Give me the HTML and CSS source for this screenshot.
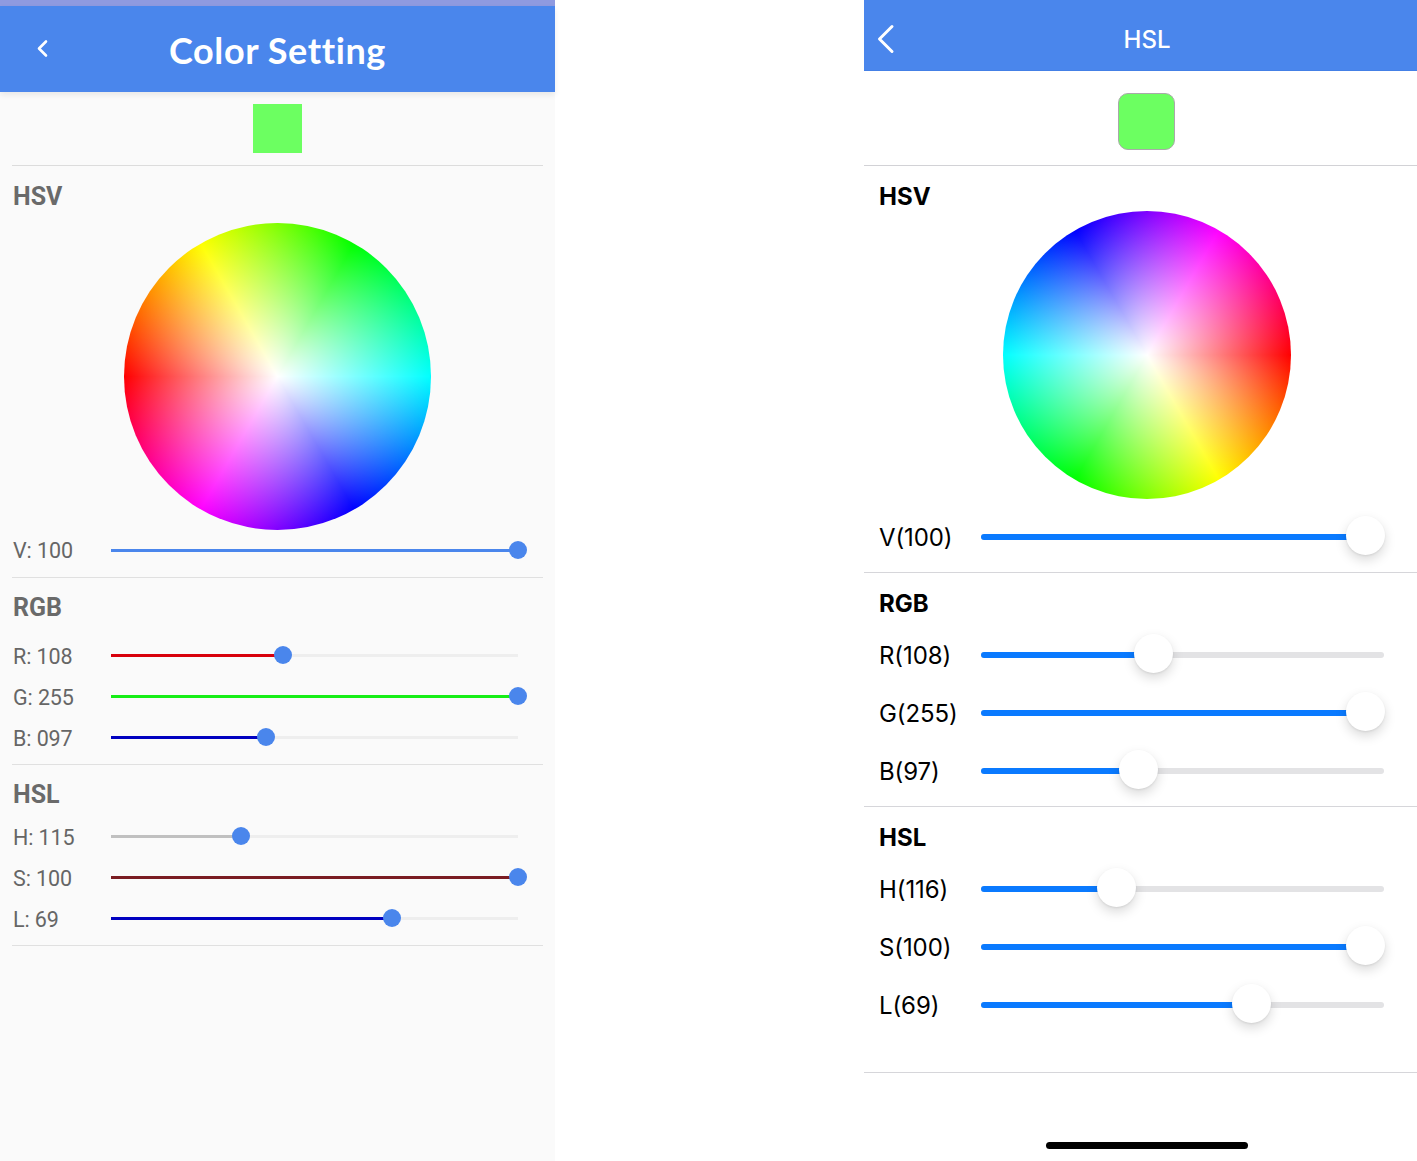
FILE: index.html
```html
<!DOCTYPE html>
<html lang="en">
<head>
<meta charset="utf-8">
<title>Color Setting</title>
<link rel="stylesheet" href="styles.css">
</head>
<body>
<div class="page">
  <section class="android">
    <div class="status-strip"></div>
    <header class="a-head">
      <svg class="a-back" viewBox="0 0 14 20" width="14" height="20"><path d="M11 2.5 L4 9.5 L11 16.5" fill="none" stroke="#fff" stroke-width="2.6" stroke-linecap="round" stroke-linejoin="round"/></svg>
      <h1 class="a-title">Color Setting</h1>
    </header>
    <div class="a-preview-wrap"><div class="a-preview"></div></div>
    <div class="a-sec a-hsv">
      <h2 class="a-h">HSV</h2>
      <div class="a-wheel"></div>
      <div class="a-row a-row-v"><span class="a-lab">V: 100</span><div class="a-track"><div class="a-fill c-blue" style="width:100%"></div><div class="a-knob" style="left:100%"></div></div></div>
    </div>
    <div class="a-sec a-rgb">
      <h2 class="a-h">RGB</h2>
      <div class="a-rows">
        <div class="a-row"><span class="a-lab">R: 108</span><div class="a-track"><div class="a-fill c-red" style="width:42.3%"></div><div class="a-knob" style="left:42.3%"></div></div></div>
        <div class="a-row"><span class="a-lab">G: 255</span><div class="a-track"><div class="a-fill c-green" style="width:100%"></div><div class="a-knob" style="left:100%"></div></div></div>
        <div class="a-row"><span class="a-lab">B: 097</span><div class="a-track"><div class="a-fill c-navy" style="width:38%"></div><div class="a-knob" style="left:38%"></div></div></div>
      </div>
    </div>
    <div class="a-sec a-hsl">
      <h2 class="a-h">HSL</h2>
      <div class="a-rows a-rows-hsl">
        <div class="a-row"><span class="a-lab">H: 115</span><div class="a-track"><div class="a-fill c-grey" style="width:32%"></div><div class="a-knob" style="left:32%"></div></div></div>
        <div class="a-row"><span class="a-lab">S: 100</span><div class="a-track"><div class="a-fill c-maroon" style="width:100%"></div><div class="a-knob" style="left:100%"></div></div></div>
        <div class="a-row"><span class="a-lab">L: 69</span><div class="a-track"><div class="a-fill c-navy" style="width:69%"></div><div class="a-knob" style="left:69%"></div></div></div>
      </div>
    </div>
  </section>

  <section class="ios">
    <header class="i-head">
      <svg class="i-back" viewBox="0 0 20 32" width="20" height="32"><path d="M16 3.5 L3.5 16 L16 28.5" fill="none" stroke="#fff" stroke-width="3" stroke-linecap="round" stroke-linejoin="round"/></svg>
      <h1 class="i-title">HSL</h1>
    </header>
    <div class="i-preview-wrap"><div class="i-preview"></div></div>
    <div class="i-sec i-hsv">
      <h2 class="i-h">HSV</h2>
      <div class="i-wheel"></div>
      <div class="i-row i-row-v"><span class="i-lab">V(100)</span><div class="i-track"><div class="i-fill" style="width:95.5%"></div><div class="i-knob" style="left:95.5%"></div></div></div>
    </div>
    <div class="i-sec i-rgb">
      <h2 class="i-h">RGB</h2>
      <div class="i-rows">
        <div class="i-row"><span class="i-lab">R(108)</span><div class="i-track"><div class="i-fill" style="width:42.9%"></div><div class="i-knob" style="left:42.9%"></div></div></div>
        <div class="i-row"><span class="i-lab">G(255)</span><div class="i-track"><div class="i-fill" style="width:95.5%"></div><div class="i-knob" style="left:95.5%"></div></div></div>
        <div class="i-row"><span class="i-lab">B(97)</span><div class="i-track"><div class="i-fill" style="width:39%"></div><div class="i-knob" style="left:39%"></div></div></div>
      </div>
    </div>
    <div class="i-sec i-hsl">
      <h2 class="i-h">HSL</h2>
      <div class="i-rows">
        <div class="i-row"><span class="i-lab">H(116)</span><div class="i-track"><div class="i-fill" style="width:33.7%"></div><div class="i-knob" style="left:33.7%"></div></div></div>
        <div class="i-row"><span class="i-lab">S(100)</span><div class="i-track"><div class="i-fill" style="width:95.5%"></div><div class="i-knob" style="left:95.5%"></div></div></div>
        <div class="i-row"><span class="i-lab">L(69)</span><div class="i-track"><div class="i-fill" style="width:67.2%"></div><div class="i-knob" style="left:67.2%"></div></div></div>
      </div>
    </div>
    <div class="home"></div>
  </section>
</div>
</body>
</html>
```
FILE: styles.css
```css
* { box-sizing: border-box; }
html, body { margin: 0; padding: 0; background: #fff; }
h1, h2 { margin: 0; }
.page { display: flex; justify-content: space-between; width: 1417px; height: 1161px; overflow: hidden; }

/* Left: Android */
.android { width: 555px; height: 1161px; background: #fafafa; font-family: Roboto, "Noto Sans", sans-serif; color: #666; }
.status-strip { height: 6px; background: #8f9ae0; }
.a-head { position: relative; height: 86px; background: #4a86ec; display: flex; align-items: center; justify-content: center; box-shadow: 0 3px 6px rgba(0,0,0,.08); }
.a-back { position: absolute; left: 35px; top: 33px; }
.a-title { font-family: Lato, sans-serif; font-size: 36px; font-weight: 700; letter-spacing: .6px; font-variant-ligatures: none; color: #fff; line-height: 40px; margin-top: 2px; }
.a-preview-wrap { margin: 0 12px; height: 74px; padding-top: 12px; display: flex; justify-content: center; border-bottom: 1px solid #dcdcdc; }
.a-preview { width: 49px; height: 49px; background: #6cff61; }
.a-sec { margin: 0 12px; border-bottom: 1px solid #e0e0e0; }
.a-hsv { height: 412px; padding-top: 16px; }
.a-rgb { height: 187px; padding-top: 15px; }
.a-hsl { height: 181px; padding-top: 15px; }
.a-h { font-family: Roboto, sans-serif; font-size: 25px; line-height: 30px; font-weight: 700; color: #6a6a6a; padding-left: 1px; }
.a-wheel { width: 307px; height: 307px; margin: 11px auto 0; border-radius: 50%;
  background: radial-gradient(circle closest-side, #fff 0, rgba(255,255,255,0) 100%),
    conic-gradient(from 270deg, #f00, #ff0, #0f0, #0ff, #00f, #f0f, #f00); }
.a-rows { display: flex; flex-direction: column; gap: 11px; margin-top: 18px; }
.a-rows-hsl { margin-top: 12px; }
.a-rows .a-track { margin-top: -2px; }
.a-row { display: flex; align-items: center; height: 30px; }
.a-row-v { margin-top: 5px; }
.a-lab { width: 99px; padding-left: 1px; font-family: Roboto, sans-serif; font-size: 21.5px; letter-spacing: -.1px; color: #666; }
.a-track { position: relative; width: 407px; height: 3px; background: #eee; }
.a-fill { height: 3px; }
.a-knob { position: absolute; top: 50%; width: 18px; height: 18px; margin: -9px 0 0 -9px; border-radius: 50%; background: #4a86ec; }
.c-blue { background: #4a86ec; }
.c-red { background: #d8000c; }
.c-green { background: #16ee16; }
.c-navy { background: #0000c0; }
.c-grey { background: #c0c0c0; }
.c-maroon { background: #7a1c22; }

/* Right: iOS */
.ios { position: relative; width: 553px; height: 1161px; background: #fff; font-family: Inter, "Liberation Sans", sans-serif; color: #000; }
.i-head { position: relative; height: 71px; padding-left: 13px; background: #4a86ec; border-bottom: 1px solid #4480e6; display: flex; align-items: center; justify-content: center; }
.i-back { position: absolute; left: 12px; top: 23px; }
.i-title { font-family: Inter, "Liberation Sans", sans-serif; font-size: 24px; font-weight: 500; color: #fff; line-height: 30px; margin-top: 10px; }
.i-preview-wrap { height: 95px; padding: 22px 0 0 11px; display: flex; justify-content: center; border-bottom: 1px solid #d2d2d6; }
.i-preview { width: 57px; height: 57px; border: 1px solid #a9a9a9; border-radius: 10px; background: #6cff61; }
.i-sec { border-bottom: 1px solid #d6d6da; padding: 0 0 0 15px; }
.i-hsv { height: 407px; padding-top: 16px; }
.i-rgb { height: 234px; padding-top: 16px; }
.i-hsl { height: 266px; padding-top: 16px; }
.i-h { font-family: Inter, sans-serif; font-size: 24px; line-height: 30px; font-weight: 700; }
.i-wheel { width: 288px; height: 288px; margin: -1px 0 0 124px; border-radius: 50%;
  background: radial-gradient(circle closest-side, #fff 0, rgba(255,255,255,0) 100%),
    conic-gradient(from 90deg, #f00, #ff0, #0f0, #0ff, #00f, #f0f, #f00); }
.i-rows { display: flex; flex-direction: column; gap: 18px; margin-top: 16px; }
.i-row { display: flex; align-items: center; height: 40px; }
.i-row-v { margin-top: 18px; }
.i-lab { width: 102px; font-family: Inter, sans-serif; font-size: 24px; font-weight: 400; letter-spacing: -.1px; }
.i-track { position: relative; width: 403px; height: 6px; border-radius: 3px; background: #e3e3e5; }
.i-fill { height: 6px; border-radius: 3px 0 0 3px; background: #0a7aff; }
.i-knob { position: absolute; top: 50%; width: 39px; height: 39px; margin: -21px 0 0 -19.5px; border-radius: 50%; background: #fff; box-shadow: 0 5px 12px rgba(0,0,0,.15), 0 1px 2px rgba(0,0,0,.08); }
.home { position: absolute; left: 182px; top: 1142px; width: 202px; height: 7px; border-radius: 4px; background: #000; }
```
